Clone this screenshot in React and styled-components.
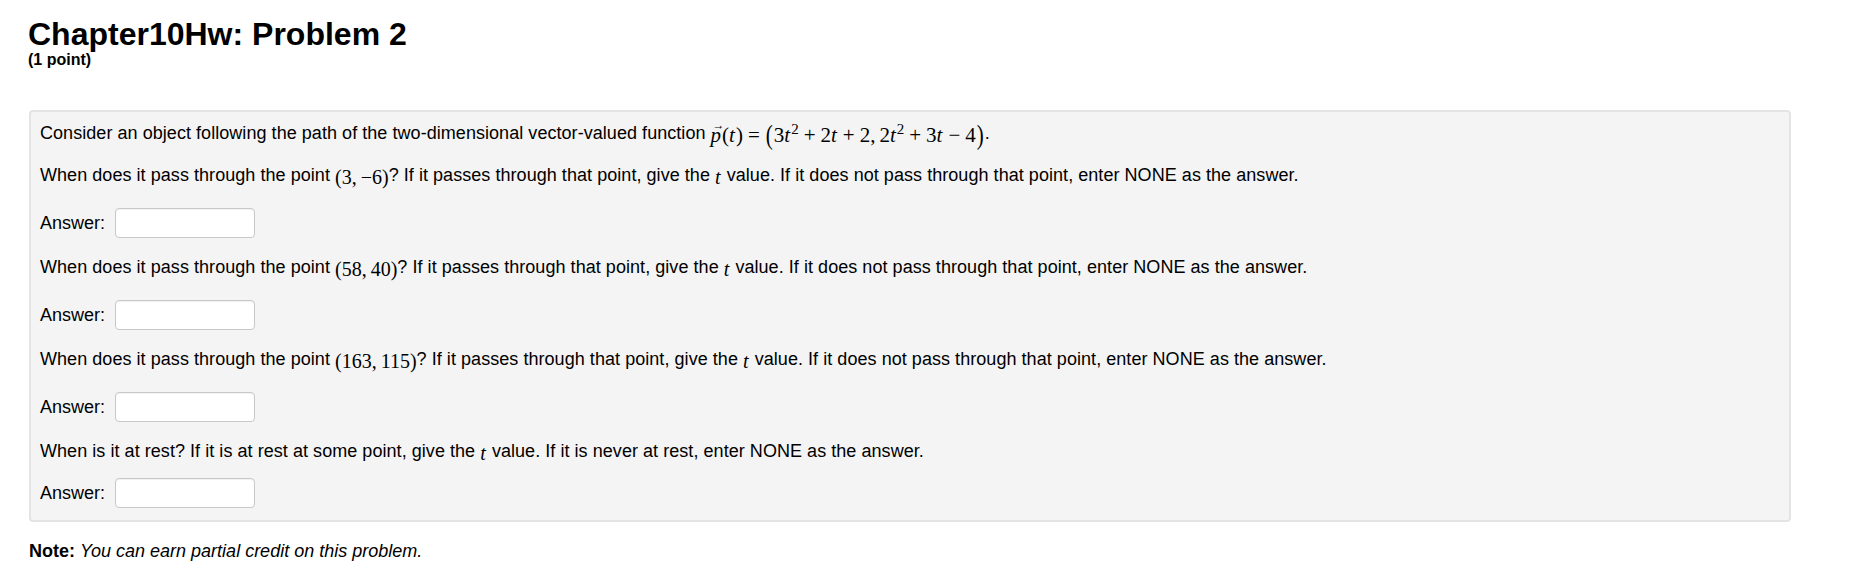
import React from 'react';
import styled, { createGlobalStyle } from 'styled-components';

const GlobalStyle = createGlobalStyle`
  body {
    margin: 0;
    background: #ffffff;
    font-family: "Liberation Sans", Arial, sans-serif;
    color: #000000;
  }
`;

const points = [
  ['3', '\u22126'],
  ['58', '40'],
  ['163', '115'],
];

function Point({ x, y }) {
  return (
    <Math>
      ({x},<Thin />
      {y})
    </Math>
  );
}

function App() {
  return (
    <>
      <GlobalStyle />
      <Page>
        <Header>
          <Title>Chapter10Hw: Problem 2</Title>
          <Points>(1 point)</Points>
        </Header>
        <ProblemBox>
          <Question $gap={20}>
            Consider an object following the path of the two-dimensional
            vector-valued function{' '}
            <Math $size={21}>
              <VecP>
                <I>p</I>
                <Arrow>&rarr;</Arrow>
              </VecP>
              (<I>t</I>)<Op>=</Op>
              <BigParen>(</BigParen>3<I>t</I>
              <Sup>2</Sup>
              <Op>+</Op>2<I>t</I>
              <Op>+</Op>2,<Thin />2<I>t</I>
              <Sup>2</Sup>
              <Op>+</Op>3<I>t</I>
              <Op>&minus;</Op>4<BigParen>)</BigParen>
            </Math>
            .
          </Question>
          {points.map(([x, y]) => (
            <React.Fragment key={x}>
              <Question $gap={22}>
                When does it pass through the point <Point x={x} y={y} />? If it
                passes through that point, give the{' '}
                <Math>
                  <I>t</I>
                </Math>{' '}
                value. If it does not pass through that point, enter NONE as the
                answer.
              </Question>
              <AnswerRow $gap={18}>
                Answer: <AnswerInput type="text" />
              </AnswerRow>
            </React.Fragment>
          ))}
          <Question $gap={16}>
            When is it at rest? If it is at rest at some point, give the{' '}
            <Math>
              <I>t</I>
            </Math>{' '}
            value. If it is never at rest, enter NONE as the answer.
          </Question>
          <AnswerRow $gap={0}>
            Answer: <AnswerInput type="text" />
          </AnswerRow>
        </ProblemBox>
        <Note>
          <b>Note:</b> <em>You can earn partial credit on this problem.</em>
        </Note>
      </Page>
    </>
  );
}

const Page = styled.div`
  padding: 16px 0 0 29px;
`;

const Header = styled.div`
  display: flex;
  flex-direction: column;
  margin-left: -1px;
  margin-bottom: 41px;
`;

const Title = styled.h1`
  margin: 0;
  font-size: 32px;
  line-height: 36px;
  font-weight: bold;
`;

const Points = styled.div`
  margin-top: -1px;
  font-size: 16px;
  line-height: 18px;
  font-weight: bold;
`;

const ProblemBox = styled.div`
  display: flex;
  flex-direction: column;
  box-sizing: border-box;
  width: 1762px;
  padding: 10px 9px 12px;
  background: #f4f4f4;
  border: 2px solid #e4e4e4;
  border-radius: 4px;
`;

const Question = styled.div`
  font-size: 18px;
  line-height: 22px;
  letter-spacing: 0.05px;
  margin-bottom: ${({ $gap }) => $gap}px;
  white-space: nowrap;
`;

const AnswerRow = styled.div`
  display: flex;
  align-items: center;
  gap: 10px;
  font-size: 18px;
  margin-bottom: ${({ $gap }) => $gap}px;
`;

const AnswerInput = styled.input`
  box-sizing: border-box;
  width: 140px;
  height: 30px;
  margin: 0;
  border: 1px solid #c8c8c8;
  border-radius: 4px;
  background: #ffffff;
  box-shadow: inset 0 1px 1px rgba(0, 0, 0, 0.06);
`;

const Math = styled.span`
  font-family: "Liberation Serif", "Times New Roman", serif;
  font-size: ${({ $size }) => $size || 20}px;
  line-height: 0;
  letter-spacing: 0;
  vertical-align: -3px;
  white-space: nowrap;
`;

const I = styled.i`
  font-style: italic;
  margin-right: 1px;
`;

const Op = styled.span`
  margin: 0 5px;
`;

const Thin = styled.span`
  display: inline-block;
  width: 4px;
`;

const Sup = styled.sup`
  font-size: 15px;
  vertical-align: 8px;
  line-height: 0;
`;

const VecP = styled.span`
  position: relative;
  display: inline-block;
`;

const Arrow = styled.span`
  position: absolute;
  left: 2px;
  top: -10px;
  font-size: 12px;
  font-style: normal;
`;

const BigParen = styled.span`
  display: inline-block;
  transform: scaleY(1.25);
  margin: 0 1px;
`;

const Note = styled.div`
  margin-top: 18px;
  font-size: 18px;
  line-height: 22px;
`;

export default App;
